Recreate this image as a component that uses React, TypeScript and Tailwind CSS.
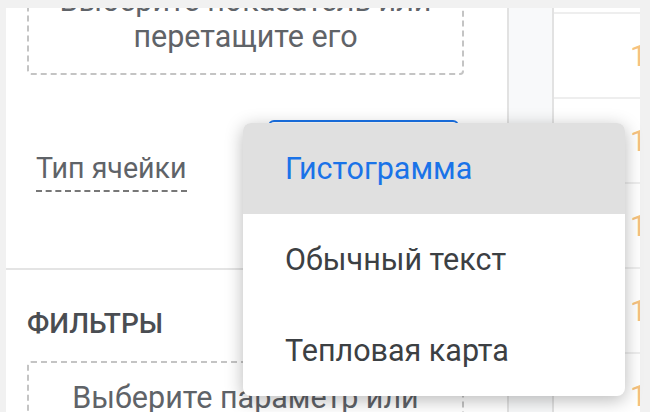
const rows = [0, 1, 2, 3, 4];

const menuItems = [
  { label: 'Гистограмма', active: true },
  { label: 'Обычный текст', active: false },
  { label: 'Тепловая карта', active: false },
];

export default function App() {
  return (
    <div className="relative h-[412px] w-[650px] overflow-hidden bg-[#f1f1f1] font-['Roboto',sans-serif]">
      <div className="flex h-full pl-[6px] pr-[10px] pt-[8px]">
        {/* Side panel (scrolled) */}
        <div className="w-[503px] shrink-0 overflow-hidden border-r-2 border-[#e2e2e2] bg-white">
          <div className="flex flex-col">
            <div className="ml-[21px] mt-[-46px] flex h-[113px] w-[437px] flex-col items-center justify-end rounded-[4px] border-2 border-dashed border-[#c4c4c4] pb-[18px] text-center text-[30.5px] leading-[36px] text-[#5f6368]">
              <span>Выберите показатель или</span>
              <span>перетащите его</span>
            </div>

            <div className="flex h-[193px] items-start">
              <div className="ml-[30px] mt-[75px] border-b-2 border-dashed border-[#777] pb-[4px] text-[28.6px] leading-[36px] text-[#5f6368]">
                Тип ячейки
              </div>
              <div className="ml-[81px] mt-[45px] h-[96px] w-[191px] rounded-[6px] border-2 border-[#1a73e8]" />
            </div>

            <div className="h-[2px] bg-[#e4e4e4]" />

            <div className="ml-[21px] mt-[36px] text-[28px] font-medium leading-[36px] text-[#4a4d52]">
              ФИЛЬТРЫ
            </div>

            <div className="ml-[21px] mt-[19px] flex h-[120px] w-[437px] flex-col items-center rounded-[4px] border-2 border-dashed border-[#c4c4c4] pt-[17px] text-center text-[30.5px] leading-[36px] text-[#5f6368]">
              <span>Выберите параметр или</span>
              <span>перетащите его</span>
            </div>
          </div>
        </div>

        {/* Narrow gutter */}
        <div className="w-[45px] shrink-0 border-r-2 border-[#e2e2e2] bg-[#f8f9fa]" />

        {/* Table column */}
        <div className="flex-1 overflow-hidden bg-white">
          <div className="h-[6px] border-b-2 border-[#eeeeee]" />
          {rows.map((r) => (
            <div
              key={r}
              className="flex h-[85px] items-center whitespace-nowrap border-b-2 border-[#eeeeee] pl-[76px] text-[30px] text-[#f6c27f]"
            >
              1 234
            </div>
          ))}
        </div>
      </div>

      {/* Dropdown menu */}
      <div className="absolute left-[243px] top-[123px] w-[382px] overflow-hidden rounded-[8px] bg-white shadow-[0_4px_18px_rgba(0,0,0,0.28)]">
        {menuItems.map((item) => (
          <div
            key={item.label}
            className={`flex h-[91px] items-center pl-[42px] text-[30.5px] leading-[36px] ${
              item.active ? 'bg-[#e0e0e0] text-[#1a73e8]' : 'text-[#3c4043]'
            }`}
          >
            {item.label}
          </div>
        ))}
      </div>
    </div>
  );
}
